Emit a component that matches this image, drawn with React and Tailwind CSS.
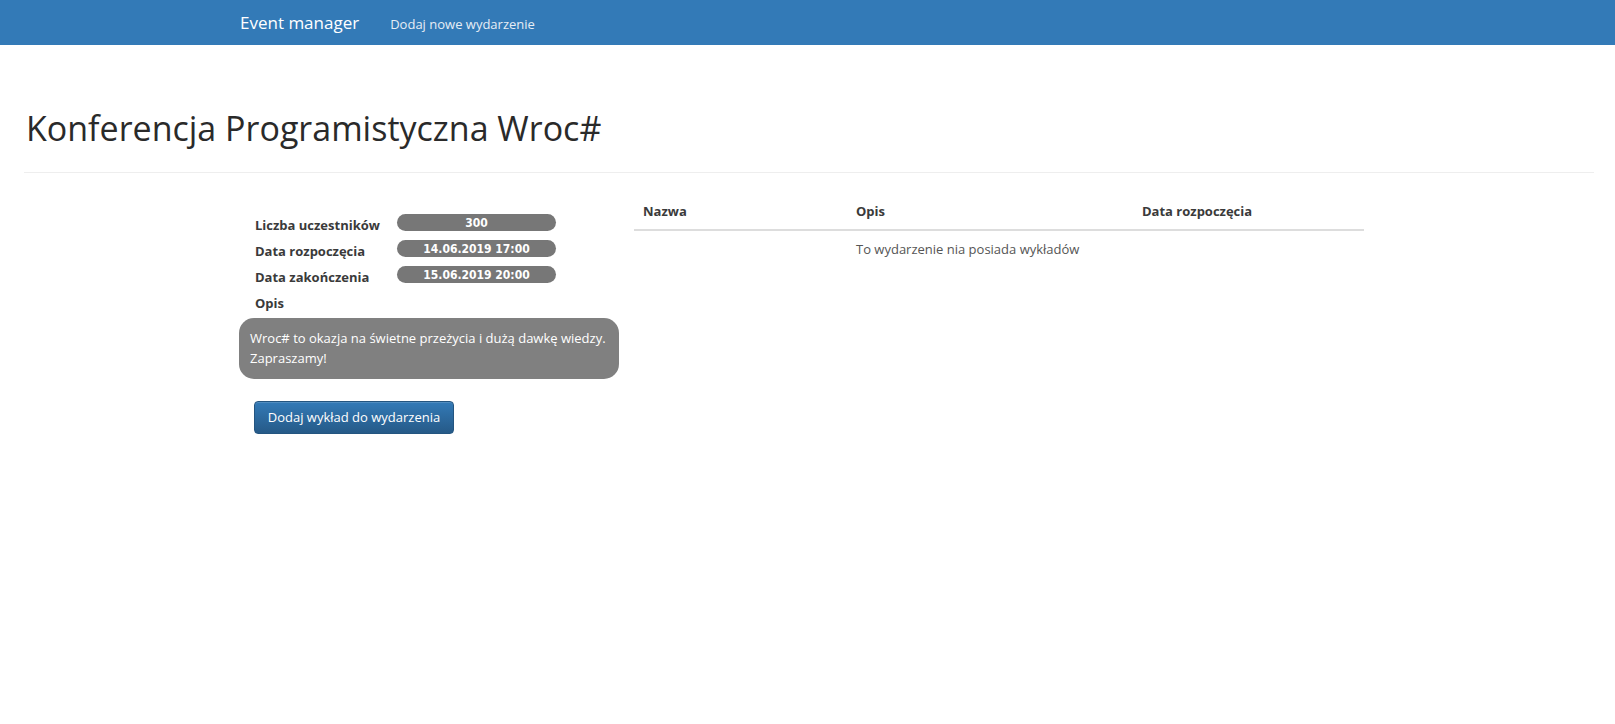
export default function App() {
  const rows = [
    ["Liczba uczestników", "300"],
    ["Data rozpoczęcia", "14.06.2019 17:00"],
    ["Data zakończenia", "15.06.2019 20:00"],
  ];
  return (
    <div className="min-h-screen bg-white font-['Open_Sans','Noto_Sans',sans-serif] text-[#333]">
      <nav className="h-[45px] bg-[#337ab7] flex items-center">
        <div className="pl-[240px] flex items-baseline">
          <span className="text-[17px] text-white">Event manager</span>
          <span className="ml-[31px] text-[13px] text-[#e6edf5]">Dodaj nowe wydarzenie</span>
        </div>
      </nav>

      <div className="pl-[24px] pr-[21px]">
        <h1 className="mt-[63px] pl-[2px] text-[34px] leading-[40px] font-normal text-[#2a2a2a]">
          Konferencja Programistyczna Wroc#
        </h1>
        <div className="mt-[24px] border-t border-[#eeeeee]" />
      </div>

      <div className="flex items-start pl-[239px]">
        <div className="w-[380px] pt-[37px]">
          {rows.map(([label, value]) => (
            <div key={label} className="flex items-start h-[26px] pl-[16px]">
              <div className="w-[142px] pt-[5px] text-[13px] leading-[20px] font-bold text-[#3a3a3a]">
                {label}
              </div>
              <div className="mt-[4px] w-[159px] h-[17px] rounded-full bg-[#777777] flex items-center justify-center text-white text-[12px] font-bold leading-none font-['DejaVu_Sans_Condensed','DejaVu_Sans',sans-serif]">
                {value}
              </div>
            </div>
          ))}
          <div className="pl-[16px] pt-[5px] text-[13px] leading-[20px] font-bold text-[#3a3a3a]">Opis</div>
          <div className="mt-[5px] rounded-[15px] bg-[#808080] pl-[11px] pr-[8px] pt-[10px] pb-[11px] text-white text-[13px] leading-[20px] whitespace-nowrap">
            Wroc# to okazja na świetne przeżycia i dużą dawkę wiedzy.
            <br />
            Zapraszamy!
          </div>
          <button className="mt-[22px] ml-[15px] w-[200px] h-[33px] rounded-[4px] border border-[#245580] bg-linear-to-b from-[#337ab7] to-[#265a88] text-white text-[13px] shadow-[inset_0_1px_0_rgba(255,255,255,0.15)]">
            Dodaj wykład do wydarzenia
          </button>
        </div>

        <table className="ml-[15px] mt-[20px] w-[730px] border-collapse text-[13px] leading-[20px]">
          <thead>
            <tr className="border-b-2 border-[#dddddd]">
              <th className="w-[214px] p-[8px] pl-[9px] text-left font-bold text-[#3a3a3a]">Nazwa</th>
              <th className="w-[286px] p-[8px] text-left font-bold text-[#3a3a3a]">Opis</th>
              <th className="w-[230px] p-[8px] text-left font-bold text-[#3a3a3a]">Data rozpoczęcia</th>
            </tr>
          </thead>
          <tbody>
            <tr>
              <td className="p-[8px]"></td>
              <td className="p-[8px] text-[#555]" colSpan={2}>To wydarzenie nia posiada wykładów</td>
            </tr>
          </tbody>
        </table>
      </div>
    </div>
  );
}
